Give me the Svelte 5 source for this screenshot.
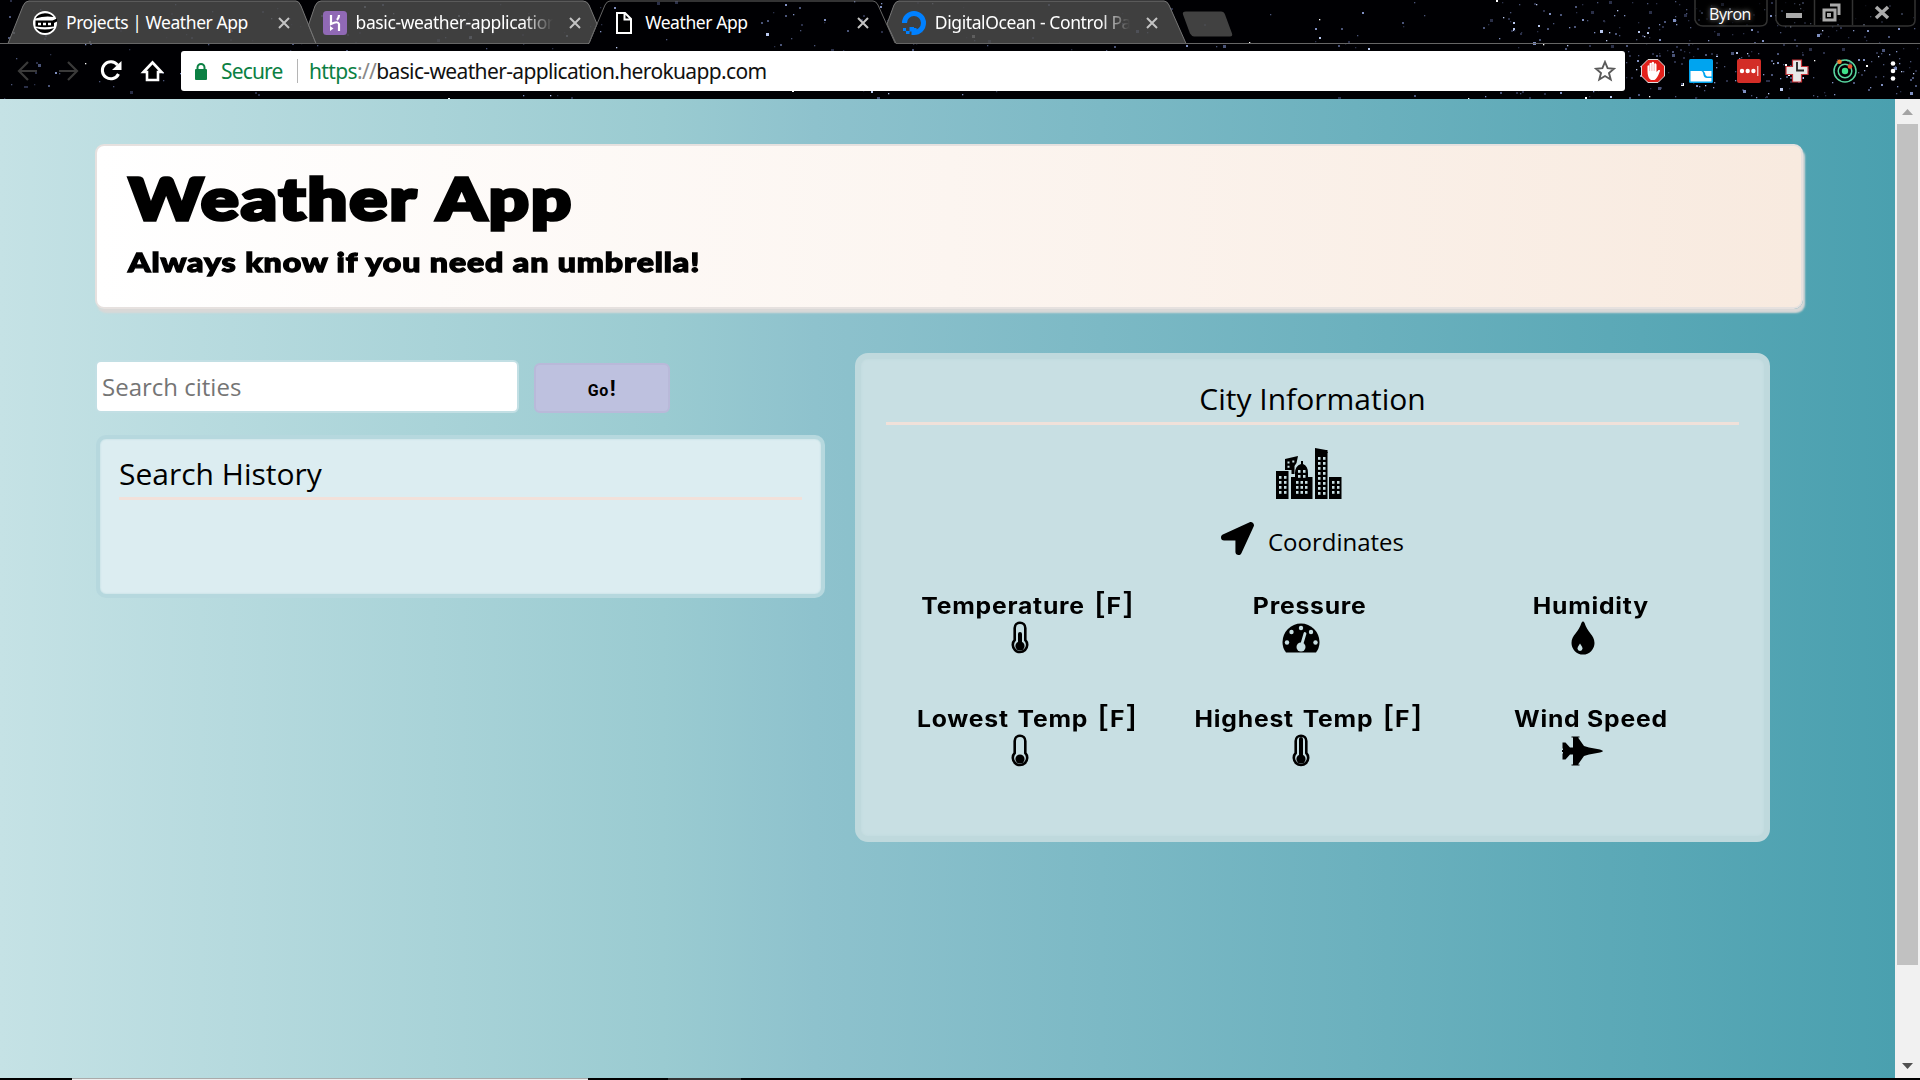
<script>
  const tabs = [
    { title: 'Projects | Weather App', icon: 'ninja' },
    { title: 'basic-weather-application', icon: 'heroku', fade: true },
    { title: 'Weather App', icon: 'file' },
    { title: 'DigitalOcean - Control Pa', icon: 'ocean', fade: true }
  ];

  const metrics = [
    { label: 'Temperature', unit: 'F', icon: 'thermo', level: 13 },
    { label: 'Pressure', icon: 'gauge' },
    { label: 'Humidity', icon: 'drop' },
    { label: 'Lowest Temp', unit: 'F', icon: 'thermo', level: 22 },
    { label: 'Highest Temp', unit: 'F', icon: 'thermo', level: 5 },
    { label: 'Wind Speed', icon: 'jet' }
  ];

  // Seeded star field for the browser theme; denser towards the right side.
  let seed = 77;
  const rnd = () => (seed = (seed * 16807) % 2147483647) / 2147483647;
  const shades = ['#2a2f48', '#4a5478', '#7f8fc0', '#b9c8ee', '#ffffff'];
  const stars = Array.from({ length: 680 }, () => {
    const x = rnd() < 0.42 ? 1480 + rnd() * 440 : rnd() * 1920;
    const s = rnd();
    const size = s > 0.93 ? 3 : s > 0.5 ? 2 : 1.3;
    return { x: Math.round(x), y: Math.round(rnd() * 98), size, fill: shades[Math.floor(rnd() * Math.sqrt(rnd()) * 5)] };
  });

  const towers = [
    [0, 23, 13, 28],
    [15, 29, 22, 22],
    [39, 2, 13, 49],
    [53, 29, 13, 22]
  ];
  const panes = [
    ...grid(3, 28, 2, 4, 5), ...grid(20, 33, 3, 3, 4.5), ...grid(42, 9, 2, 8, 5), ...grid(56, 33, 2, 3, 5),
    ...grid(22, 22, 2, 2, 5)
  ];
  function grid(x, y, c, r, p) {
    const out = [];
    for (let i = 0; i < c; i++) for (let j = 0; j < r; j++) out.push([x + i * p, y + j * 5]);
    return out;
  }
</script>

<div class="screen">
  <header class="chrome">
    <svg class="backdrop" width="1920" height="99" viewBox="0 0 1920 99">
      <rect width="1920" height="99" fill="#000003" />
      {#each stars as s}
        <rect x={s.x} y={s.y} width={s.size} height={s.size} fill={s.fill} />
      {/each}
      <g fill="#484848" fill-opacity=".88" stroke="#777" stroke-width="1">
        <path d="M8 43.500L23 6Q25 1 29 1H296Q299 1 301 6L316 43.500Z" />
        <path d="M308.500 25L315 6Q317 1 321 1H583Q587 1 589 5L597 24L589 43.500H316Z" />
        <path d="M887 24L894 5Q896 1 899 1H1164Q1167 1 1169 5L1186 43.500H896Z" />
      </g>
      <path d="M589 43L605 5Q607 1 610 1H873Q876 1 878 5L895 43" fill="none" stroke="#666" />
      <path d="M1186 11H1221Q1224 11 1225 14L1232 33Q1233 36 1230 36H1194Q1192 36 1190 33L1183 14Q1182 11 1186 11Z" transform="translate(0 .5)" fill="#484848" fill-opacity=".9" />
      <path d="M0 43.500H588M896 43.500H1920" stroke="#666" />
      <g fill="#000" fill-opacity=".65" stroke="#333" stroke-width="1.500">
        <path d="M1695 0V20Q1697 26 1703 26H1760Q1767 26 1767 20V0" />
        <path d="M1776 0V20Q1778 26 1784 26H1908Q1915 26 1915 20V0M1814.500 0V25M1852.500 0V25" />
      </g>
    </svg>

    <div class="strip">
      <div class="tabs">
        {#each tabs as tab}
          <div class="tab">
            <svg class="fav" viewBox="0 0 24 24" width="24" height="24">
              {#if tab.icon === 'ninja'}
                <circle cx="12" cy="12" r="12" fill="#fff" />
                <path d="M2.500 7.500Q5 2.500 12 2.200Q18 2.500 20.500 6Q12 4.500 2.500 7.500ZM3 17Q12 20 21 17Q18 22 12 22Q6 22 3 17Z" fill="#000" />
                <path d="M2.500 9.500H19.500L24 7.500V10.500L21 12V15.500Q12 17 2.500 15.500Z" fill="#000" />
                <path d="M5 13H18.500" stroke="#fff" stroke-width="2.400" stroke-dasharray="3 2" />
              {:else if tab.icon === 'heroku'}
                <rect width="24" height="24" rx="3.500" fill="#9069b5" />
                <path d="M8 4V13Q15 9.500 16 13V20M16 4Q16 7 14 9" fill="none" stroke="#fff" stroke-width="2.200" />
                <path d="M7 15L10.500 17.500L7 20Z" fill="#fff" />
              {:else if tab.icon === 'file'}
                <path d="M5 2H13L19 8V22H5ZM12.500 2V8.500H19" fill="#000" stroke="#fff" stroke-width="2" />
              {:else}
                <path d="M2.500 12A9.500 9.500 0 1 1 12 21.500V17" fill="none" stroke="#0080ff" stroke-width="5" />
                <path d="M7.500 16H12V20.500H7.500ZM4 20H7.500V23H4ZM1 17H4V20H1Z" fill="#0080ff" />
              {/if}
            </svg>
            <span class="title" class:fade={tab.fade}>{tab.title}</span>
            <svg class="close" width="12" height="12" viewBox="0 0 12 12"><path d="M1 1L11 11M11 1L1 11" stroke="#c4c4c4" stroke-width="2" /></svg>
          </div>
        {/each}
      </div>
      <div class="user">Byron</div>
      <svg class="winctl" width="140" height="27" viewBox="0 0 140 27">
        <path d="M10 15.500H26" stroke="#aaa" stroke-width="5" />
        <path d="M48 10H59V20H48ZM54 5H63V15" fill="none" stroke="#aaa" stroke-width="3" />
        <path d="M51 13H55V17H51Z" fill="#aaa" />
        <path d="M100 7L112 18M112 7L100 18" stroke="#aaa" stroke-width="3.500" />
      </svg>
    </div>

    <div class="toolbar">
      <svg class="nav" width="164" height="40" viewBox="0 0 164 40">
        <g fill="none" stroke="#3a3a3a" stroke-width="2.200">
          <path d="M37 20H19M28 11L19 20L28 29" />
          <path d="M59 20H77M68 11L77 20L68 29" />
        </g>
        <path d="M117.500 14A8.500 8.500 0 1 0 118.500 23" fill="none" stroke="#fff" stroke-width="3" />
        <path d="M121.500 10V19H112Z" fill="#fff" />
        <path d="M143.500 21L152.500 11.500L161.500 21H158V29H147V21Z" fill="#000" stroke="#fff" stroke-width="2.600" />
      </svg>
      <div class="omni">
        <svg width="12" height="17" viewBox="0 0 12 17"><rect y="6" width="12" height="11" rx="1" fill="#0b8043" /><path d="M2.500 7V4.500A3.500 3.500 0 0 1 9.500 4.500V7" fill="none" stroke="#0b8043" stroke-width="2" /></svg>
        <span class="secure">Secure</span>
        <i class="sep"></i>
        <span class="url"><b>https</b><em>://</em>basic-weather-application.herokuapp.com</span>
        <svg class="star" width="22" height="22" viewBox="0 0 22 22"><path d="M11 2L13.600 8.200L20 8.700L15 13L16.700 19.500L11 16L5.300 19.500L7 13L2 8.700L8.400 8.200Z" fill="none" stroke="#5a5a5a" stroke-width="1.900" /></svg>
      </div>
      <div class="exts">
        <svg width="24" height="24" viewBox="0 0 24 24">
          <path d="M7 .5H17L23.500 7V17L17 23.500H7L.5 17V7Z" fill="#e3201b" stroke="#ddd" />
          <path d="M6.500 12V7Q7.500 5.500 8.500 7V4.500Q9.500 3 10.700 4.500V3.500Q12 2 13 3.500V5Q14.500 3.500 15.500 5.500V13L17.500 11Q19.500 10.500 19 12Q16 20 13.500 21H10Q6.500 19 6.500 12Z" fill="#fff" />
          <path d="M8.600 7V12M10.900 5V12M13.200 5V12" stroke="#e88" stroke-width=".6" />
        </svg>
        <svg width="24" height="24" viewBox="0 0 24 24"><rect width="24" height="24" rx="1.500" fill="#00a4ef" /><path d="M1.500 12H12Q14 12 14.500 16Q15 19 18 19H22.500V22.500H1.500ZM14.500 12H22.500V17.500H18Q16 17 16 14Z" fill="#fff" /></svg>
        <svg width="24" height="24" viewBox="0 0 24 24"><rect width="24" height="24" rx="2" fill="#d32d27" /><circle cx="5" cy="12" r="2.200" fill="#fff" /><circle cx="10.700" cy="12" r="2.200" fill="#fff" /><circle cx="16.400" cy="12" r="2.200" fill="#fff" /><path d="M20.800 7V17" stroke="#fff" /></svg>
        <svg width="24" height="24" viewBox="0 0 24 24"><path d="M7.500 1H16.500V7.500H23V15.500H16.500V23H7.500V15.500H1V7.500H7.500Z" fill="#e8e8e8" stroke="#c7343a" stroke-width="1.200" /><path d="M12 3V11.500H19" fill="none" stroke="#222" stroke-width="1.800" /></svg>
        <svg width="24" height="24" viewBox="0 0 24 24"><g fill="none" stroke="#58d6a0" stroke-width="1.500"><circle cx="12" cy="12" r="11" /><circle cx="12" cy="12" r="6.800" /></g><circle cx="12" cy="12" r="3.200" fill="#3fe08b" /><circle cx="6.500" cy="2.700" r="2.300" fill="#f08030" /><circle cx="17" cy="7.500" r="2.300" fill="#e8552d" /></svg>
        <svg width="24" height="24" viewBox="0 0 24 24"><g fill="#fff"><circle cx="12" cy="4.500" r="2.300" /><circle cx="12" cy="12" r="2.300" /><circle cx="12" cy="19.500" r="2.300" /></g></svg>
      </div>
    </div>
  </header>

  <div class="viewport">
    <main class="page">
      <section class="hero">
        <h1>Weather App</h1>
        <h2>Always know if you need an umbrella!</h2>
      </section>

      <div class="columns">
        <div class="left">
          <form class="search">
            <input type="text" placeholder="Search cities" />
            <button type="button">Go<span>!</span></button>
          </form>
          <section class="history"><h3>Search History</h3></section>
        </div>

        <section class="city">
          <h3>City Information</h3>
          <svg class="skyline" width="66" height="51" viewBox="0 0 66 51">
            {#each towers as t}
              <rect x={t[0]} y={t[1]} width={t[2] - 0.5} height={t[3]} />
            {/each}
            <path d="M39 0L50 2L52 5H39ZM19 30V25Q19 18 25 16V13H27V16Q32 18 32 25V30ZM9 11L22 8L20.500 15L18.500 18V26H15.500V22H9Z" />
            <g fill="#c8dfe3">
              {#each panes as p}
                <rect x={p[0]} y={p[1]} width="2.500" height="2.800" />
              {/each}
              <path d="M11.500 13.500H13.500V15.500H11.500ZM16.300 12.500H18.300V14.500H16.300ZM11.500 17.800H13.500V19.800H11.500Z" />
            </g>
          </svg>
          <div class="coords">
            <svg width="33" height="33" viewBox="0 0 512 512"><path d="M444.520 3.520L28.740 195.420c-47.970 22.390-31.980 92.750 19.190 92.750h175.910v175.910c0 51.170 70.360 67.170 92.750 19.190l191.900-415.780c15.990-38.390-25.590-79.970-63.970-63.970z" /></svg>
            <span>Coordinates</span>
          </div>
          <div class="metrics">
            {#each metrics as m}
              <div class="metric">
                <h4 class:long={m.unit}>{m.label}{#if m.unit}&nbsp;<span>[</span>{m.unit}<span>]</span>{/if}</h4>
                {#if m.icon === 'thermo'}
                  <svg width="18" height="34" viewBox="0 0 18 34">
                    <path d="M3.700 19V7A5.300 5.300 0 0 1 14.300 7V19A7.200 7.200 0 1 1 3.700 19Z" fill="none" stroke="#000" stroke-width="2.600" />
                    <circle cx="9" cy="25" r="4.600" />
                    <path d="M9 25V{m.level}" stroke="#000" stroke-width={m.level > 20 ? 1 : 4} stroke-linecap="round" />
                  </svg>
                {:else if m.icon === 'gauge'}
                  <svg width="38" height="34" viewBox="0 0 38 34">
                    <path d="M4 31.500Q.5 27 .5 21A18.500 18.500 0 0 1 37.500 21Q37.500 27 34 31.500Z" />
                    <g fill="#c8dfe3"><circle cx="5" cy="21.500" r="2.200" /><circle cx="9.500" cy="11" r="2.200" /><circle cx="19" cy="7" r="2.200" /><circle cx="29" cy="11" r="2.200" /><circle cx="33.500" cy="21.500" r="2.200" /><circle cx="19" cy="26" r="4.500" /></g>
                    <path d="M19 26L23 12.500" stroke="#c8dfe3" stroke-width="2.800" stroke-linecap="round" />
                  </svg>
                {:else if m.icon === 'drop'}
                  <svg width="24" height="34" viewBox="0 0 24 34">
                    <path d="M10.400 2Q12 -.8 13.600 2C16 11 23.500 14 23.500 22A11.500 11.500 0 0 1 .5 22C.5 14 8 11 10.400 2Z" />
                    <path d="M9 22.500Q11.500 26 11.500 27.500A2.500 2.500 0 0 1 6.500 27.500Q6.500 26 9 22.500Z" fill="#c8dfe3" />
                  </svg>
                {:else}
                  <svg width="41" height="34" viewBox="0 0 41 34">
                    <path d="M9.500 2.500H17.500V3.500H16L22 12L27 13.500L38 15.500Q41 16.500 41 17Q41 17.500 38 18.500L27 20.500L22 22L16 30.500H17.500V31.500H9.500V30.500H11V20.500H8L3.500 25.500H.5V19.500H1V18H0V16H1V14.500H.5V8.500H3.500L8 13.500H11V3.500H9.500Z" />
                  </svg>
                {/if}
              </div>
            {/each}
          </div>
        </section>
      </div>
    </main>
    <aside class="scroll">
      <svg width="25" height="25" viewBox="0 0 25 25"><path d="M7 16L12.500 10L18 16Z" fill="#a3a3a3" /></svg>
      <div class="track"><div class="thumb"></div></div>
      <svg width="25" height="25" viewBox="0 0 25 25"><path d="M7 10L12.500 16L18 10Z" fill="#505050" /></svg>
    </aside>
  </div>

  <footer class="taskbar"><i></i><b></b></footer>
</div>

<style>
  :global(body) { margin: 0; overflow: hidden; }
  .screen { width: 1920px; height: 1080px; display: flex; flex-direction: column; overflow: hidden; font-family: 'Open Sans', 'Noto Sans', sans-serif; color: #000; }
  svg { display: block; flex: none; }
  h1, h2, h3, h4 { margin: 0; font-weight: 400; white-space: nowrap; }

  .chrome { position: relative; height: 99px; flex: none; background: #000; overflow: hidden; }
  .backdrop { position: absolute; inset: 0; }
  .strip { position: relative; height: 44px; display: flex; }
  .tabs { display: flex; width: 1695px; }
  .tab { width: 289.600px; box-sizing: border-box; padding: 2px 0 0 33px; display: flex; align-items: center; }
  .fav { margin-right: 9px; }
  .title { width: 199px; white-space: nowrap; color: #fff; font-family: 'Noto Sans', sans-serif; font-size: 17.500px; line-height: 26px; letter-spacing: -.43px; margin-top: -2px; }
  .fade { letter-spacing: -.4px; mask-image: linear-gradient(90deg, #000 84%, transparent 99%); }
  .close { margin-left: 14px; }
  .user { width: 70px; text-align: center; color: #fff; font-size: 16px; line-height: 28px; letter-spacing: -.5px; text-shadow: 0 0 5px #aaa; }
  .winctl { margin-left: 11px; }
  .toolbar { position: relative; height: 55px; display: flex; align-items: flex-start; padding-top: 7px; box-sizing: border-box; }
  .nav { margin-right: 17px; }
  .omni { width: 1444px; height: 40px; background: #fff; border-radius: 3px; display: flex; align-items: center; padding: 0 9px 0 14px; box-sizing: border-box; font-family: 'Noto Sans', sans-serif; font-size: 21px; white-space: nowrap; }
  .secure { margin-left: 14px; width: 76px; color: #0b8043; letter-spacing: -.85px; }
  .sep { width: 1px; height: 24px; background: #b5b5b5; margin-right: 11px; }
  .url { letter-spacing: -.64px; color: #111; }
  .url b { font-weight: 400; color: #0b8043; }
  .url em { font-style: normal; color: #888; }
  .star { margin-left: auto; }
  .exts { display: flex; gap: 24px; padding: 8px 0 0 16px; }

  .viewport { flex: none; height: 979px; display: flex; }
  .page { width: 1895px; box-sizing: border-box; padding: 45px 0 0 95px; background: linear-gradient(90deg, #c5e2e5 0%, #9acbd1 35%, #8ec2cd 43%, #4aa0af 100%); }
  .hero { width: 1708px; height: 165px; box-sizing: border-box; border: 2px solid #e6e1df; border-radius: 9px; padding: 18px 0 0 31px; background: linear-gradient(90deg, #fff, #fcf5f0 50%, #f8eadf); box-shadow: 2px 4px 2px #d9d8d7; font-family: Lato, sans-serif; }
  h1 { width: max-content; margin-left: 1px; font-weight: 900; font-size: 57px; line-height: 68px; letter-spacing: 1.900px; word-spacing: 3px; -webkit-text-stroke: 3.500px #000; transform: scaleX(1.23); transform-origin: 0 0; }
  h2 { width: max-content; font-weight: 900; font-size: 26.500px; line-height: 32px; margin-top: 14px; letter-spacing: .75px; word-spacing: 0; -webkit-text-stroke: 1.300px #000; transform: scaleX(1.21); transform-origin: 0 0; }

  .columns { display: flex; padding-top: 44px; }
  .left { width: 760px; padding-top: 7px; box-sizing: border-box; }
  .search { display: flex; align-items: flex-end; height: 53px; }
  input { width: 424px; height: 53px; box-sizing: border-box; border: 2px solid #c2dfe4; border-radius: 6px; background: #fff; padding: 0 0 0 5px; font: 24px 'Open Sans', sans-serif; outline: none; }
  input::placeholder { color: #757575; opacity: 1; }
  button { width: 136px; height: 50px; margin-left: 15px; padding: 3px 0 0; border: 2px solid #b9b9d9; border-radius: 6px; background: #bec1df; font: 700 16px/20px Roboto, sans-serif; letter-spacing: .5px; color: #000; }
  button span { font-size: 22px; margin-left: 1px; }
  .history { width: 729px; height: 163px; margin: 22px 0 0 1px; box-sizing: border-box; border: 4px solid #b6d8de; border-radius: 10px; background: #dcedf1; padding: 14px 19px 0; box-shadow: inset 0 0 2px #b6d8de; }
  h3 { font-size: 30px; }
  .history h3 { border-bottom: 3px solid #f2e1da; height: 44px; line-height: 41px; }

  .city { width: 915px; height: 489px; box-sizing: border-box; border: 6px solid #bfd9dd; border-radius: 13px; background: #c8dfe3; padding: 19px 25px 0; display: flex; flex-direction: column; align-items: center; box-shadow: inset 0 0 3px #bfd9dd; }
  .city h3 { width: 853px; height: 44px; line-height: 41px; border-bottom: 3px solid #f0e1da; text-align: center; }
  .skyline { margin: 23px 0 0 -7px; }
  .coords { display: flex; align-items: flex-start; height: 66px; padding-top: 23px; box-sizing: border-box; }
  .coords span { margin: 1px 0 0 14px; font-size: 24px; line-height: 37px; }
  .metrics { width: 844px; margin: 24px 7px 0 0; display: grid; grid-template-columns: repeat(3, 281.500px); grid-auto-rows: 113px; }
  .metric { display: flex; flex-direction: column; align-items: center; }
  h4 { font: 700 22.500px/34px Inter, sans-serif; height: 32px; letter-spacing: .7px; transform: scaleX(1.1); }
  h4.long { word-spacing: 2px; line-height: 33px; }
  h4 span { font-size: 30px; font-weight: 500; line-height: 20px; }
  .metric svg { margin-left: -16px; }

  .scroll { width: 25px; background: #f1f1f1; display: flex; flex-direction: column; }
  .track { flex: 1; padding: 0 2px; }
  .thumb { height: 841px; background: #c1c1c1; }
  .taskbar { height: 2px; flex: none; background: #000; display: flex; }
  .taskbar i { margin-left: 72px; width: 516px; background: linear-gradient(#aaa 50%, #eee 50%); }
  .taskbar b { margin-left: 80px; width: 73px; background: #333; }
</style>
